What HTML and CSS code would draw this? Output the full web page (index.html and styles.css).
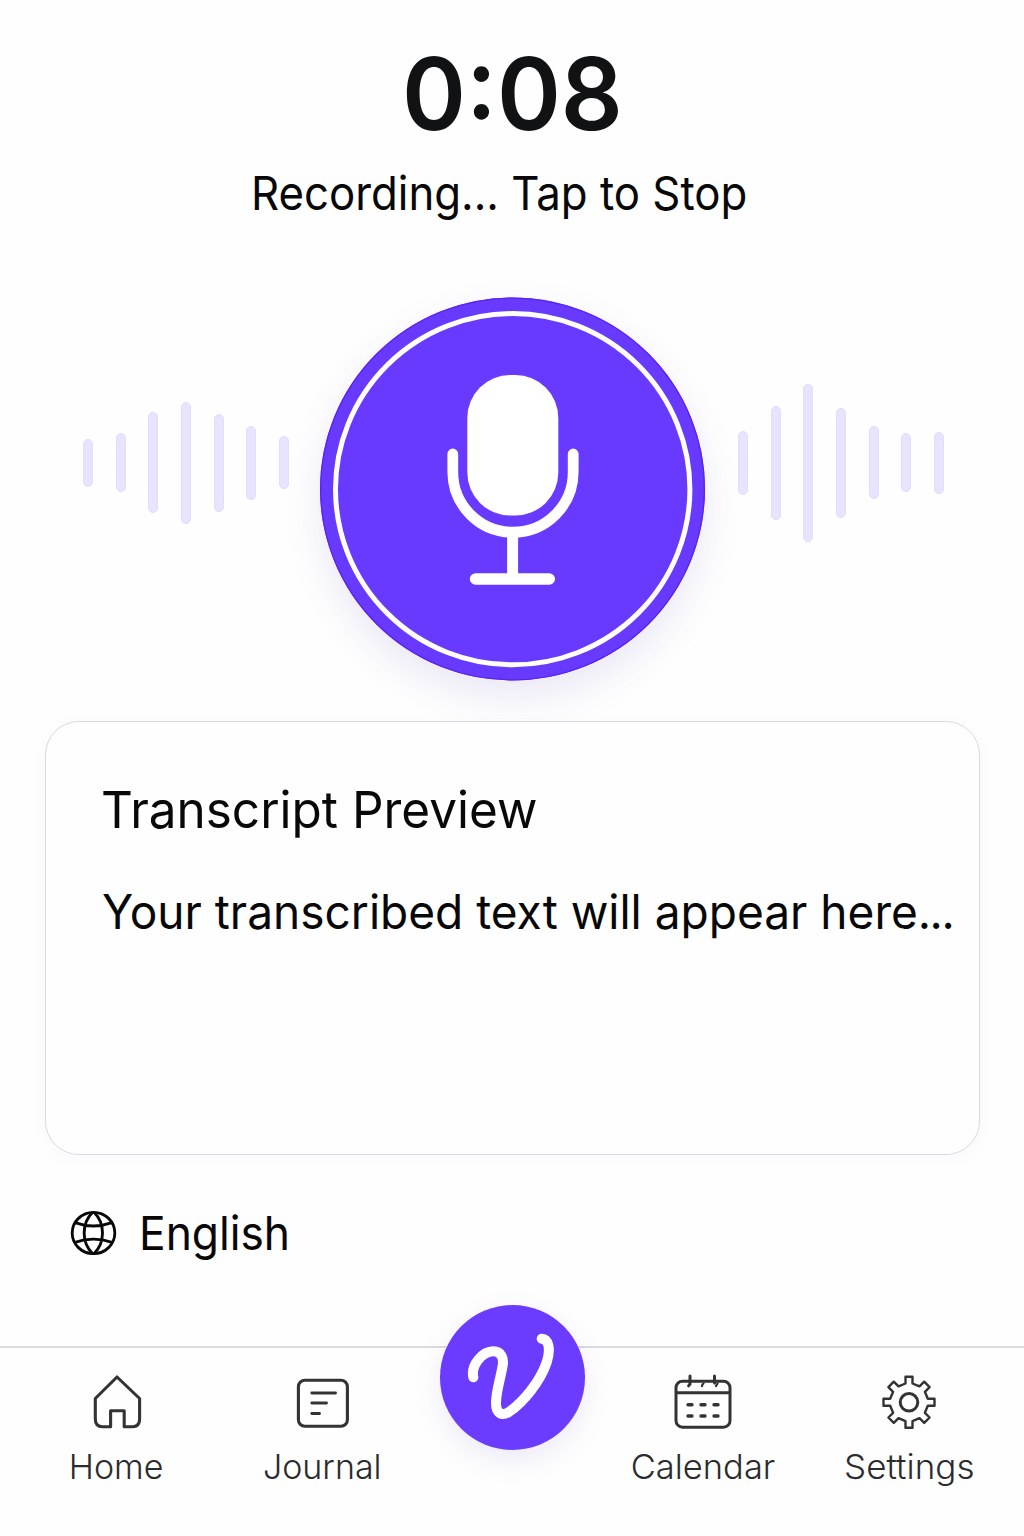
FILE: index.html
```html
<!DOCTYPE html>
<html lang="en">
<head>
<meta charset="utf-8">
<title>Voice Journal</title>
<link rel="stylesheet" href="styles.css">
</head>
<body>
<main class="screen">
  <header class="status">
    <h1 class="timer"><span class="fit fit-timer">0:08</span></h1>
    <p class="hint"><span class="fit fit-hint">Recording... Tap to Stop</span></p>
  </header>

  <section class="recorder">
    <div class="wave">
      <i class="bar h48"></i><i class="bar h59"></i><i class="bar h101"></i><i class="bar h122"></i><i class="bar h98"></i><i class="bar h74"></i><i class="bar h53"></i>
    </div>
    <button class="mic" aria-label="Stop recording">
      <svg viewBox="320 297 385 384" width="385" height="384" fill="none" stroke="#fff">
        <ellipse cx="512.5" cy="489" rx="192.5" ry="191.5" fill="#6839ff" stroke="none"/>
        <ellipse cx="512.5" cy="489" rx="191.9" ry="190.9" stroke="#5a22f2" stroke-width="1.2"/>
        <ellipse cx="512.7" cy="489.2" rx="177.2" ry="175.6" stroke-width="5"/>
        <rect x="467.3" y="375" width="91" height="140.5" rx="43" ry="43" fill="#fff" stroke="none"/>
        <path d="M452.8 454v18a60.2 60.2 0 0 0 120.4 0v-18" stroke-width="10.8" stroke-linecap="round"/>
        <path d="M512.6 532v46" stroke-width="11"/>
        <path d="M475.6 579h73.6" stroke-width="11.6" stroke-linecap="round"/>
      </svg>
    </button>
    <div class="wave">
      <i class="bar h64"></i><i class="bar h114"></i><i class="bar h158"></i><i class="bar h110"></i><i class="bar h73"></i><i class="bar h59"></i><i class="bar h62"></i>
    </div>
  </section>

  <section class="card">
    <h2 class="card-title"><span class="fit fit-title">Transcript Preview</span></h2>
    <p class="card-text"><span class="fit fit-text">Your transcribed text will appear here<span class="dots">...</span></span></p>
  </section>

  <div class="language">
    <svg class="globe" viewBox="90 60 141 138" width="47" height="46" fill="none" stroke="#080808" stroke-width="8.500">
      <ellipse cx="160.500" cy="129" rx="64" ry="62"/>
      <path d="M158 67C124 100 124 158 158 191M162 67C196 100 196 158 162 191M105 98Q160 118 216 98M105 157Q160 138 216 157"/>
    </svg>
    <span class="fit fit-lang">English</span>
  </div>

  <nav class="tabs">
    <a class="tab tab-home">
      <svg viewBox="0 0 64 64" width="64" height="64" fill="none" stroke="#333" stroke-width="3.100" stroke-linejoin="round">
        <path d="M25.600 58.700V42.700H39.200V58.700H47.500Q54.600 58.700 54.600 51V30.500L32 9L10.300 30.500V51Q10.300 58.700 17.500 58.700Z"/>
      </svg>
      <span class="fit fit-home">Home</span>
    </a>
    <a class="tab tab-journal">
      <svg viewBox="0 0 64 64" width="64" height="64" fill="none" stroke="#333" stroke-width="3.100" stroke-linecap="round">
        <rect x="8.400" y="12.200" width="49" height="46" rx="6.500"/>
        <path d="M21.800 25H45.500M21.800 35H36.500M21.800 45.500H29.500" stroke-width="2.900"/>
      </svg>
      <span class="fit fit-journal">Journal</span>
    </a>
    <a class="fab" aria-label="Voice">
      <svg viewBox="30 30 435 435" width="145" height="145" fill="none" stroke="#fff" stroke-width="30" stroke-linecap="round" stroke-linejoin="round">
        <path d="M130 247C122 210 158 169 190 169C214 169 222 190 218 212C210 258 198 290 198 324C198 354 214 365 238 350C280 322 332 257 350 202C364 158 354 132 335 131"/>
      </svg>
    </a>
    <a class="tab tab-calendar">
      <svg viewBox="0 0 64 64" width="64" height="64" fill="none" stroke="#333" stroke-width="3" stroke-linecap="round">
        <rect x="5" y="13.200" width="54" height="46" rx="6.500"/>
        <path d="M6 24.700H58M19 8V16L17.600 17.800M43.500 8V15"/>
        <path d="M32.500 15.500Q31.300 16 31 18M45 18L46.500 15.500" stroke-width="2.300"/>
        <path d="M17 36.800H21M30 36.800H34M43 36.800H47M17 48H21M30 48H34M43 48H47" stroke-width="3.400"/>
      </svg>
      <span class="fit fit-calendar">Calendar</span>
    </a>
    <a class="tab tab-settings">
      <svg viewBox="0 0 64 64" width="64" height="64" fill="none" stroke="#333" stroke-width="2.400" stroke-linejoin="round">
        <circle cx="32" cy="34.300" r="8.800" stroke-width="3"/>
        <path d="M28.500 8.800H35.500V15.500L42.500 18.400L47.200 13.700L52.600 19.100L47.900 23.800L50.800 30.800H57.500V37.800H50.800L47.900 44.800L52.600 49.500L47.200 54.900L42.500 50.200L35.500 53.100V59.800H28.500V53.100L21.500 50.200L16.800 54.900L11.400 49.500L16.100 44.800L13.200 37.800H6.500V30.800H13.200L16.100 23.800L11.400 19.100L16.800 13.700L21.500 18.400L28.500 15.500Z"/>
      </svg>
      <span class="fit fit-settings">Settings</span>
    </a>
  </nav>
</main>
</body>
</html>
```
FILE: styles.css
```css
* { box-sizing: border-box; }

body {
  margin: 0;
  background: #fefefe;
  color: #080808;
  font-family: Inter, "Liberation Sans", sans-serif;
}

h1, h2, p { margin: 0; font-weight: 400; }

.screen {
  display: flex;
  flex-direction: column;
  width: 1024px;
  height: 1536px;
  overflow: hidden;
}

.fit { display: inline-block; white-space: nowrap; transform-origin: 0 50%; }
.fit-timer { transform: scaleX(0.96); }
.fit-hint { transform: scaleX(0.941); }
.fit-title { transform: scaleX(0.97); }
.fit-text { transform: scaleX(0.959); }
.fit-lang { transform: scaleX(0.943); }
.dots { letter-spacing: -1.5px; }

.status { height: 297px; padding-top: 43px; }
.timer { padding-left: 402px; font-size: 101px; font-weight: 600; line-height: 100px; color: #111214; }
.hint { margin-top: 21.5px; padding-left: 250.5px; font-size: 46.5px; line-height: 56px; }

.recorder { display: flex; height: 384px; padding-left: 83px; }
.wave { display: flex; align-items: center; gap: 22.7px; height: 331px; }
.bar { width: 10px; border: 1px solid #e2dcff; border-radius: 5px; background: #e8e3ff; }
.h48 { height: 48px; }
.h53 { height: 53px; }
.h59 { height: 59px; }
.h62 { height: 62px; }
.h64 { height: 64px; }
.h73 { height: 73px; }
.h74 { height: 74px; }
.h98 { height: 98px; }
.h101 { height: 101px; }
.h110 { height: 110px; }
.h114 { height: 114px; }
.h122 { height: 122px; }
.h158 { height: 158px; }

.mic {
  width: 385px;
  height: 384px;
  margin: 0 33px 0 30.8px;
  padding: 0;
  border: 0;
  border-radius: 50%;
  background: none;
  box-shadow: 0 16px 38px rgba(70, 55, 170, 0.11);
}
.mic svg, .fab svg, .tab svg { display: block; }

.card {
  width: 935px;
  height: 434px;
  margin: 40px 0 0 45px;
  padding: 58px 0 0 55.5px;
  border: 1.5px solid #d9d8e3;
  border-radius: 34px;
  background: #fefefe;
  box-shadow: 0 3px 18px rgba(60, 50, 140, 0.03);
}
.card-title { margin-left: -1px; font-size: 51px; line-height: 60px; }
.card-text { margin-top: 42px; font-size: 48px; line-height: 60px; }

.language {
  display: flex;
  align-items: center;
  gap: 22px;
  height: 56px;
  margin: 50px 0 0 70px;
  font-size: 47px;
  line-height: 56px;
}

/* Column widths keep the centre button on the screen axis */
.tabs {
  display: grid;
  grid-template-columns: 233px 177.4px 204.2px 176.8px 235.2px;
  justify-items: center;
  height: 190px;
  margin-top: 85px;
  border-top: 2px solid #dbdae1;
}
.tab {
  display: flex;
  flex-direction: column;
  align-items: center;
  padding-top: 20px;
  color: #2b2b2d;
  font-size: 34.5px;
  font-weight: 300;
  line-height: 40px;
}
.tab .fit { margin-top: 15px; transform-origin: 50% 50%; }
.fit-home, .fit-journal { transform: scaleX(0.985); }
.fit-settings { transform: scaleX(1.015); }
.fab {
  width: 145px;
  height: 145px;
  margin-top: -43px;
  border-radius: 50%;
  background: #6b3bff;
  box-shadow: 0 10px 28px rgba(80, 60, 190, 0.1);
}
```
